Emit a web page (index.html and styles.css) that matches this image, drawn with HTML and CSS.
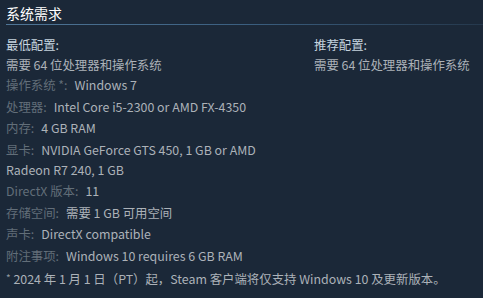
FILE: index.html
```html
<!DOCTYPE html>
<html lang="zh-CN">
<head>
<meta charset="utf-8">
<link rel="stylesheet" href="styles.css">
</head>
<body>
<div class="sysreq">
  <h2 class="title">系统需求</h2>
  <div class="cols">
    <div class="col left">
      <ul class="reqs">
        <li class="head"><strong>最低配置:</strong></li>
        <li class="first">需要 64 位处理器和操作系统</li>
        <li><span class="lbl">操作系统 *:</span>Windows 7</li>
        <li><span class="lbl">处理器:</span>Intel Core i5-2300 or AMD FX-4350</li>
        <li><span class="lbl">内存:</span>4 GB RAM</li>
        <li><span class="lbl">显卡:</span>NVIDIA GeForce GTS 450, 1 GB or AMD Radeon R7 240, 1 GB</li>
        <li><span class="lbl">DirectX 版本:</span>11</li>
        <li><span class="lbl">存储空间:</span>需要 1 GB 可用空间</li>
        <li><span class="lbl">声卡:</span>DirectX compatible</li>
        <li><span class="lbl">附注事项:</span>Windows 10 requires 6 GB RAM</li>
      </ul>
    </div>
    <div class="col right">
      <ul class="reqs">
        <li class="head"><strong>推荐配置:</strong></li>
        <li class="first">需要 64 位处理器和操作系统</li>
      </ul>
    </div>
  </div>
  <p class="note"><span class="ast">*</span> 2024 年 1 月 1 日（PT）起，Steam 客户端将仅支持 Windows 10 及更新版本。</p>
</div>
</body>
</html>
```

FILE: styles.css
```css
html, body {
  margin: 0;
  padding: 0;
  background: #1b2838;
}
body {
  width: 483px;
  height: 298px;
  overflow: hidden;
  font-family: "Noto Sans CJK SC", "Noto Sans", Arial, sans-serif;
  font-size: 12.4px;
  color: #acb2b8;
}
.sysreq {
  padding: 0 0 0 6px;
}
.title {
  margin: 0;
  padding: 5px 0 2px;
  font-size: 14px;
  font-weight: normal;
  line-height: 17px;
  color: #ffffff;
  border-bottom: 1px solid transparent;
  border-image: linear-gradient(to right, #4f7596 0%, #3b5f80 50%, #25384c 100%) 1;
}
.cols {
  display: grid;
  grid-template-columns: 290px 1fr;
  column-gap: 18px;
  margin-top: 10px;
}
.reqs {
  list-style: none;
  margin: 0;
  padding: 0;
}
.reqs li {
  line-height: 20px;
  margin-bottom: 1.5px;
}
.reqs li.head,
.reqs li.first {
  margin-bottom: 0;
}
.reqs strong {
  font-weight: normal;
  color: #c6d4df;
}
.lbl {
  color: #626e79;
  margin-right: 7px;
}
.note {
  margin: 1px 0 0;
  line-height: 20px;
  color: #acb2b8;
}
.ast {
  color: #8f98a0;
  font-size: 10px;
  vertical-align: 2px;
}
```
